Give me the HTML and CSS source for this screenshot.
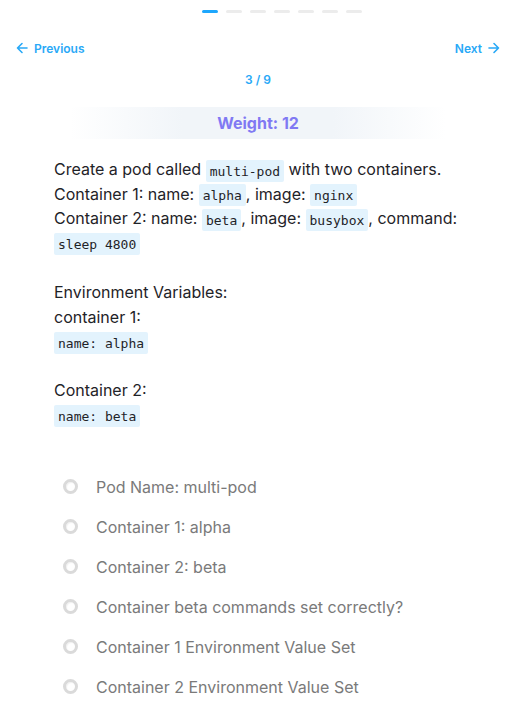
FILE: index.html
```html
<!DOCTYPE html>
<html>
<head>
<meta charset="utf-8">
<link rel="stylesheet" href="styles.css">
</head>
<body>
<div class="page">
  <div class="progress">
    <span class="seg active"></span><span class="seg"></span><span class="seg"></span><span class="seg"></span><span class="seg"></span><span class="seg"></span><span class="seg"></span>
  </div>
  <div class="nav">
    <a class="nav-link">
      <svg width="12" height="12" viewBox="0 0 12 12" fill="none" stroke="currentColor" stroke-width="1.6" stroke-linecap="round" stroke-linejoin="round"><path d="M11 6H1.5M6 1.5L1.5 6 6 10.5"/></svg>
      <span>Previous</span>
    </a>
    <a class="nav-link">
      <span>Next</span>
      <svg width="12" height="12" viewBox="0 0 12 12" fill="none" stroke="currentColor" stroke-width="1.6" stroke-linecap="round" stroke-linejoin="round"><path d="M1 6h9.5M6 1.5L10.5 6 6 10.5"/></svg>
    </a>
  </div>
  <div class="counter">3 / 9</div>
  <div class="weight">Weight: 12</div>
  <div class="question">
    Create a pod called <code>multi-pod</code> with two containers.<br>
    Container 1: name: <code>alpha</code>, image: <code>nginx</code><br>
    Container 2: name: <code>beta</code>, image: <code>busybox</code>, command: <code>sleep 4800</code><br>
    <br>
    Environment Variables:<br>
    container 1:<br>
    <code>name: alpha</code><br>
    <br>
    Container 2:<br>
    <code>name: beta</code>
  </div>
  <ul class="checks">
    <li><span class="radio"></span><span>Pod Name: multi-pod</span></li>
    <li><span class="radio"></span><span>Container 1: alpha</span></li>
    <li><span class="radio"></span><span>Container 2: beta</span></li>
    <li><span class="radio"></span><span>Container beta commands set correctly?</span></li>
    <li><span class="radio"></span><span>Container 1 Environment Value Set</span></li>
    <li><span class="radio"></span><span>Container 2 Environment Value Set</span></li>
  </ul>
</div>
</body>
</html>
```
FILE: styles.css
```css
html, body {
  margin: 0;
  padding: 0;
  background: #ffffff;
}
body {
  font-family: Inter, "Noto Sans", sans-serif;
  color: #1f2328;
}
.page {
  width: 516px;
  box-sizing: border-box;
}
.progress {
  display: flex;
  gap: 8px;
  padding-left: 202px;
  padding-top: 10px;
  height: 3px;
}
.seg {
  width: 16px;
  height: 3px;
  border-radius: 2px;
  background: #ececec;
}
.seg.active {
  background: #1ea7fd;
}
.nav {
  display: flex;
  justify-content: space-between;
  align-items: center;
  padding: 0 16px 0 16px;
  margin-top: 27px;
  height: 16px;
}
.nav-link {
  display: flex;
  align-items: center;
  gap: 6px;
  font-size: 12px;
  font-weight: 600;
  color: #29a9f7;
}
.counter {
  text-align: center;
  font-size: 12px;
  font-weight: 600;
  color: #29a9f7;
  margin-top: 16px;
  line-height: 16px;
}
.weight {
  margin: 19px 70px 0 70px;
  height: 32px;
  line-height: 32px;
  text-align: center;
  font-size: 16px;
  font-weight: 700;
  color: #8079f3;
  background: linear-gradient(to right, rgba(241,245,249,0), #f1f5f9 30%, #f1f5f9 70%, rgba(241,245,249,0));
}
.question {
  margin: 18px 54px 0 54px;
  font-size: 16px;
  line-height: 24.6px;
  color: #1f2328;
}
.question code {
  font-family: "DejaVu Sans Mono", monospace;
  font-size: 13px;
  line-height: 15px;
  background: #e3f3fd;
  padding: 3.5px 4px;
  border-radius: 2px;
  color: #1f2328;
}
.checks {
  list-style: none;
  margin: 39px 0 0 0;
  padding: 0 0 0 63px;
}
.checks li {
  display: flex;
  align-items: center;
  gap: 18px;
  height: 40px;
  font-size: 16px;
  color: #7a7a7a;
}
.radio {
  width: 15px;
  height: 15px;
  box-sizing: border-box;
  border-radius: 50%;
  border: 3px solid #dadada;
  background: #fff;
  box-shadow: inset 1px 1px 1px rgba(0,0,0,0.06);
  flex: none;
}
```
